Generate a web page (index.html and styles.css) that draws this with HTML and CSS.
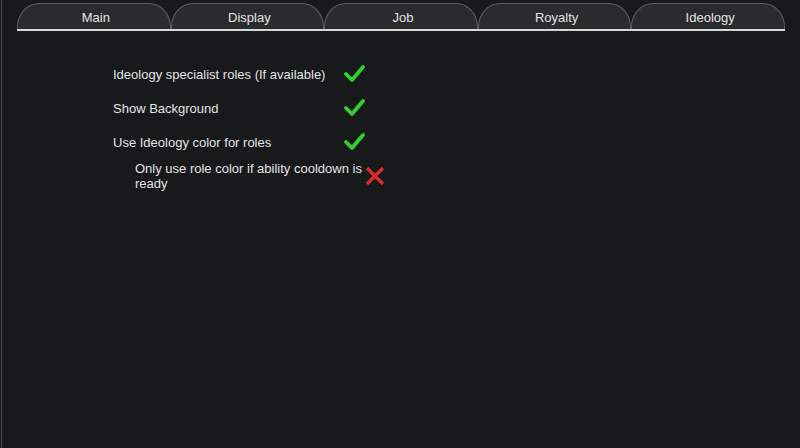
FILE: index.html
```html
<!DOCTYPE html>
<html>
<head>
<meta charset="utf-8">
<link rel="stylesheet" href="styles.css">
</head>
<body>
<div class="window">
  <div class="edge"></div>
  <div class="main">
    <div class="tabbar">
      <div class="tab">Main</div>
      <div class="tab">Display</div>
      <div class="tab">Job</div>
      <div class="tab">Royalty</div>
      <div class="tab">Ideology</div>
    </div>
    <div class="options">
      <div class="row">
        <div class="label">Ideology specialist roles (If available)</div>
        <svg class="icon" width="22" height="20" viewBox="0 0 22 20"><polyline points="2,10 8,16 19,3" fill="none" stroke="#2fd12f" stroke-width="3.8" stroke-linecap="round" stroke-linejoin="round"/></svg>
      </div>
      <div class="row">
        <div class="label">Show Background</div>
        <svg class="icon" width="22" height="20" viewBox="0 0 22 20"><polyline points="2,10 8,16 19,3" fill="none" stroke="#2fd12f" stroke-width="3.8" stroke-linecap="round" stroke-linejoin="round"/></svg>
      </div>
      <div class="row">
        <div class="label">Use Ideology color for roles</div>
        <svg class="icon" width="22" height="20" viewBox="0 0 22 20"><polyline points="2,10 8,16 19,3" fill="none" stroke="#2fd12f" stroke-width="3.8" stroke-linecap="round" stroke-linejoin="round"/></svg>
      </div>
      <div class="row sub">
        <div class="label">Only use role color if ability cooldown is ready</div>
        <svg class="icon" width="22" height="22" viewBox="0 0 22 22"><path d="M3,3 L19,19 M19,3 L3,19" fill="none" stroke="#dd2a2a" stroke-width="3.4" stroke-linecap="butt"/></svg>
      </div>
    </div>
  </div>
</div>
</body>
</html>
```
FILE: styles.css
```css
html, body {
  margin: 0;
  padding: 0;
  background: #17191b;
}
body {
  font-family: "Liberation Sans", Arial, sans-serif;
  color: #e4e4e4;
  width: 800px;
  height: 448px;
  overflow: hidden;
}
.window {
  display: flex;
  height: 448px;
}
.edge {
  width: 1px;
  margin-left: 1px;
  background: #44474a;
}
.main {
  flex: 1;
  padding-left: 15px;
}
.tabbar {
  display: flex;
  width: 768px;
  margin-top: 3px;
  border-bottom: 2px solid #d6d6d6;
}
.tab {
  flex: 1;
  height: 26px;
  box-sizing: border-box;
  background: #2a2b2d;
  border: 1px solid #5d5f61;
  border-bottom: none;
  border-radius: 22px 22px 0 0 / 24px 24px 0 0;
  display: flex;
  align-items: center;
  justify-content: center;
  font-size: 13px;
  padding-top: 1px;
  padding-left: 4px;
}
.options {
  padding-left: 96px;
  padding-top: 26px;
}
.row {
  display: flex;
  align-items: center;
  height: 34px;
  font-size: 13px;
}
.row .label {
  width: 231px;
}
.row .icon {
  display: block;
}
.row.sub {
  padding-left: 22px;
  height: 34px;
  line-height: 15px;
}
.row.sub .label {
  width: 229px;
}
```
